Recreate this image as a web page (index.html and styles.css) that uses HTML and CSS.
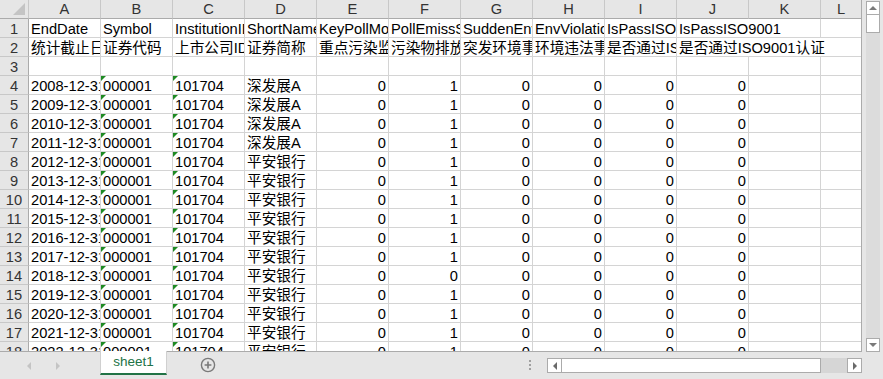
FILE: index.html
```html
<!DOCTYPE html>
<html lang="zh-CN">
<head>
<meta charset="UTF-8">
<title>sheet1</title>
<link rel="stylesheet" href="styles.css">
</head>
<body>
<div class="excel">
    <div class="main">
        <div class="sheet">
            <div class="row head">
                <div class="corner"><span class="corner-mark"></span></div>
                <div class="col">A</div><div class="col">B</div><div class="col">C</div><div class="col">D</div>
                <div class="col">E</div><div class="col">F</div><div class="col">G</div><div class="col">H</div>
                <div class="col">I</div><div class="col">J</div><div class="col">K</div><div class="col">L</div>
            </div>
            <div class="row">
                <div class="rh">1</div>
                <div class="c">EndDate</div><div class="c">Symbol</div><div class="c">InstitutionID</div><div class="c">ShortName</div>
                <div class="c">KeyPollMonitor</div><div class="c">PollEmissStd</div><div class="c">SuddenEnvAccident</div><div class="c">EnvViolation</div>
                <div class="c">IsPassISO14001</div><div class="c span2">IsPassISO9001</div><div class="c"></div>
            </div>
            <div class="row">
                <div class="rh">2</div>
                <div class="c">统计截止日期</div><div class="c">证券代码</div><div class="c">上市公司ID</div><div class="c">证券简称</div>
                <div class="c">重点污染监控单位</div><div class="c">污染物排放是否达标</div><div class="c">突发环境事故</div><div class="c">环境违法事件</div>
                <div class="c">是否通过ISO14001认证</div><div class="c span3">是否通过ISO9001认证</div>
            </div>
            <div class="row">
                <div class="rh">3</div>
                <div class="c"></div><div class="c"></div><div class="c"></div><div class="c"></div><div class="c"></div><div class="c"></div>
                <div class="c"></div><div class="c"></div><div class="c"></div><div class="c"></div><div class="c"></div><div class="c"></div>
            </div>
            <div class="row">
                <div class="rh">4</div>
                <div class="c">2008-12-31</div><div class="c t">000001</div><div class="c t">101704</div><div class="c">深发展A</div>
                <div class="c n">0</div><div class="c n">1</div><div class="c n">0</div><div class="c n">0</div><div class="c n">0</div><div class="c n">0</div><div class="c"></div><div class="c"></div>
            </div>
            <div class="row">
                <div class="rh">5</div>
                <div class="c">2009-12-31</div><div class="c t">000001</div><div class="c t">101704</div><div class="c">深发展A</div>
                <div class="c n">0</div><div class="c n">1</div><div class="c n">0</div><div class="c n">0</div><div class="c n">0</div><div class="c n">0</div><div class="c"></div><div class="c"></div>
            </div>
            <div class="row">
                <div class="rh">6</div>
                <div class="c">2010-12-31</div><div class="c t">000001</div><div class="c t">101704</div><div class="c">深发展A</div>
                <div class="c n">0</div><div class="c n">1</div><div class="c n">0</div><div class="c n">0</div><div class="c n">0</div><div class="c n">0</div><div class="c"></div><div class="c"></div>
            </div>
            <div class="row">
                <div class="rh">7</div>
                <div class="c">2011-12-31</div><div class="c t">000001</div><div class="c t">101704</div><div class="c">深发展A</div>
                <div class="c n">0</div><div class="c n">1</div><div class="c n">0</div><div class="c n">0</div><div class="c n">0</div><div class="c n">0</div><div class="c"></div><div class="c"></div>
            </div>
            <div class="row">
                <div class="rh">8</div>
                <div class="c">2012-12-31</div><div class="c t">000001</div><div class="c t">101704</div><div class="c">平安银行</div>
                <div class="c n">0</div><div class="c n">1</div><div class="c n">0</div><div class="c n">0</div><div class="c n">0</div><div class="c n">0</div><div class="c"></div><div class="c"></div>
            </div>
            <div class="row">
                <div class="rh">9</div>
                <div class="c">2013-12-31</div><div class="c t">000001</div><div class="c t">101704</div><div class="c">平安银行</div>
                <div class="c n">0</div><div class="c n">1</div><div class="c n">0</div><div class="c n">0</div><div class="c n">0</div><div class="c n">0</div><div class="c"></div><div class="c"></div>
            </div>
            <div class="row">
                <div class="rh">10</div>
                <div class="c">2014-12-31</div><div class="c t">000001</div><div class="c t">101704</div><div class="c">平安银行</div>
                <div class="c n">0</div><div class="c n">1</div><div class="c n">0</div><div class="c n">0</div><div class="c n">0</div><div class="c n">0</div><div class="c"></div><div class="c"></div>
            </div>
            <div class="row">
                <div class="rh">11</div>
                <div class="c">2015-12-31</div><div class="c t">000001</div><div class="c t">101704</div><div class="c">平安银行</div>
                <div class="c n">0</div><div class="c n">1</div><div class="c n">0</div><div class="c n">0</div><div class="c n">0</div><div class="c n">0</div><div class="c"></div><div class="c"></div>
            </div>
            <div class="row">
                <div class="rh">12</div>
                <div class="c">2016-12-31</div><div class="c t">000001</div><div class="c t">101704</div><div class="c">平安银行</div>
                <div class="c n">0</div><div class="c n">1</div><div class="c n">0</div><div class="c n">0</div><div class="c n">0</div><div class="c n">0</div><div class="c"></div><div class="c"></div>
            </div>
            <div class="row">
                <div class="rh">13</div>
                <div class="c">2017-12-31</div><div class="c t">000001</div><div class="c t">101704</div><div class="c">平安银行</div>
                <div class="c n">0</div><div class="c n">1</div><div class="c n">0</div><div class="c n">0</div><div class="c n">0</div><div class="c n">0</div><div class="c"></div><div class="c"></div>
            </div>
            <div class="row">
                <div class="rh">14</div>
                <div class="c">2018-12-31</div><div class="c t">000001</div><div class="c t">101704</div><div class="c">平安银行</div>
                <div class="c n">0</div><div class="c n">0</div><div class="c n">0</div><div class="c n">0</div><div class="c n">0</div><div class="c n">0</div><div class="c"></div><div class="c"></div>
            </div>
            <div class="row">
                <div class="rh">15</div>
                <div class="c">2019-12-31</div><div class="c t">000001</div><div class="c t">101704</div><div class="c">平安银行</div>
                <div class="c n">0</div><div class="c n">1</div><div class="c n">0</div><div class="c n">0</div><div class="c n">0</div><div class="c n">0</div><div class="c"></div><div class="c"></div>
            </div>
            <div class="row">
                <div class="rh">16</div>
                <div class="c">2020-12-31</div><div class="c t">000001</div><div class="c t">101704</div><div class="c">平安银行</div>
                <div class="c n">0</div><div class="c n">1</div><div class="c n">0</div><div class="c n">0</div><div class="c n">0</div><div class="c n">0</div><div class="c"></div><div class="c"></div>
            </div>
            <div class="row">
                <div class="rh">17</div>
                <div class="c">2021-12-31</div><div class="c t">000001</div><div class="c t">101704</div><div class="c">平安银行</div>
                <div class="c n">0</div><div class="c n">1</div><div class="c n">0</div><div class="c n">0</div><div class="c n">0</div><div class="c n">0</div><div class="c"></div><div class="c"></div>
            </div>
            <div class="row">
                <div class="rh">18</div>
                <div class="c">2022-12-31</div><div class="c t">000001</div><div class="c t">101704</div><div class="c">平安银行</div>
                <div class="c n">0</div><div class="c n">1</div><div class="c n">0</div><div class="c n">0</div><div class="c n">0</div><div class="c n">0</div><div class="c"></div><div class="c"></div>
            </div>
        </div>
        <div class="vscroll">
            <div class="sb-btn"><span class="tri up"></span></div>
            <div class="sb-thumb v"></div>
            <div class="sb-track v"></div>
            <div class="sb-btn"><span class="tri down"></span></div>
        </div>
    </div>
    <div class="tabbar">
        <div class="nav">
            <span class="tri left dim"></span>
            <span class="tri right dim"></span>
        </div>
        <div class="tab">sheet1</div>
        <div class="add">
            <svg width="16" height="16" viewBox="0 0 16 16">
                <circle cx="8" cy="8" r="6.6" fill="none" stroke="#7a7a7a" stroke-width="1.4"/>
                <path d="M8 4.6v6.8M4.6 8h6.8" stroke="#7a7a7a" stroke-width="1.6"/>
            </svg>
        </div>
        <div class="grip"><i></i><i></i><i></i></div>
        <div class="hscroll">
            <div class="sb-btn"><span class="tri left"></span></div>
            <div class="sb-thumb h"></div>
            <div class="sb-track h"></div>
            <div class="sb-btn"><span class="tri right"></span></div>
        </div>
    </div>
</div>
</body>
</html>
```

FILE: styles.css
```css
* {
    box-sizing: border-box;
}
body {
    margin: 0;
    font-family: "Liberation Sans", "Noto Sans CJK SC", sans-serif;
    font-size: 14.67px;
    color: #000;
    background-color: #e6e6e6;
}
.excel {
    width: 883px;
    height: 379px;
    overflow: hidden;
}
.main {
    display: flex;
    height: 352px;
}
.sheet {
    width: 862px;
    height: 352px;
    overflow: hidden;
    background-color: #fff;
    border-right: 1px solid #ababab;
    border-bottom: 1px solid #ababab;
}
.row {
    display: grid;
    grid-template-columns: 29px repeat(11, 72px) 40px;
    height: 19px;
}
.row > div {
    border-right: 1px solid #d4d4d4;
    border-bottom: 1px solid #d4d4d4;
    overflow: hidden;
    white-space: nowrap;
    line-height: 18px;
}
.row > div:last-child {
    border-right: none;
}
.head > div {
    background-color: #e6e6e6;
    border-right-color: #c8c8c8;
    border-bottom-color: #ababab;
    color: #333;
    text-align: center;
}
.corner {
    position: relative;
}
.corner-mark {
    position: absolute;
    right: 3px;
    bottom: 3px;
    border-left: 12px solid transparent;
    border-bottom: 12px solid #c4c4c4;
}
.rh {
    background-color: #e6e6e6;
    border-right-color: #ababab !important;
    border-bottom-color: #c8c8c8 !important;
    color: #333;
    text-align: center;
    padding-top: 1px;
}
.c {
    padding: 1px 2px 0 2px;
    position: relative;
}
.c.n {
    text-align: right;
}
.c.t::before {
    content: "";
    position: absolute;
    left: 0;
    top: 0;
    border-top: 5px solid #1e8a23;
    border-right: 5px solid transparent;
}
.span2 {
    grid-column: span 2;
}
.span3 {
    grid-column: span 3;
}
.vscroll {
    width: 21px;
    padding: 1px 3px 0 4px;
    display: flex;
    flex-direction: column;
}
.sb-btn {
    background-color: #fff;
    border: 1px solid #ababab;
    display: flex;
    align-items: center;
    justify-content: center;
}
.vscroll .sb-btn {
    height: 14px;
}
.sb-thumb {
    background-color: #fff;
    border: 1px solid #ababab;
}
.sb-thumb.v {
    height: 19px;
    margin-top: -1px;
}
.sb-track.v {
    flex: 1;
    background-color: #dcdcdc;
}
.tri {
    width: 0;
    height: 0;
}
.tri.up {
    border-left: 4px solid transparent;
    border-right: 4px solid transparent;
    border-bottom: 4px solid #7a7a7a;
}
.tri.down {
    border-left: 4px solid transparent;
    border-right: 4px solid transparent;
    border-top: 4px solid #7a7a7a;
}
.tri.left {
    border-top: 4px solid transparent;
    border-bottom: 4px solid transparent;
    border-right: 4px solid #6a6a6a;
}
.tri.right {
    border-top: 4px solid transparent;
    border-bottom: 4px solid transparent;
    border-left: 4px solid #6a6a6a;
}
.tri.dim {
    border-right-color: #c4c4c4;
    border-left-color: #c4c4c4;
}
.tabbar {
    display: flex;
    align-items: flex-start;
    height: 27px;
}
.nav {
    width: 100px;
    height: 27px;
    display: flex;
    align-items: center;
    gap: 25px;
    padding-left: 27px;
}
.tab {
    width: 67px;
    height: 24px;
    margin-top: -1px;
    background-color: #fff;
    border-left: 1px solid #d0d0d0;
    border-right: 1px solid #d0d0d0;
    border-bottom: 2px solid #217346;
    color: #217346;
    font-size: 13.5px;
    text-align: center;
    line-height: 22px;
}
.add {
    margin: 5px 0 0 33px;
    height: 16px;
}
.add svg {
    display: block;
}
.grip {
    display: flex;
    flex-direction: column;
    gap: 2px;
    margin: 8px 0 0 313px;
}
.grip i {
    display: block;
    width: 2px;
    height: 2px;
    background-color: #a0a0a0;
}
.hscroll {
    display: flex;
    margin: 6px 0 0 16px;
    height: 15px;
    width: 315px;
}
.hscroll .sb-btn {
    width: 15px;
}
.sb-thumb.h {
    width: 260px;
    margin-left: -1px;
}
.sb-track.h {
    width: 26px;
    background-color: #d6d6d6;
}
```
